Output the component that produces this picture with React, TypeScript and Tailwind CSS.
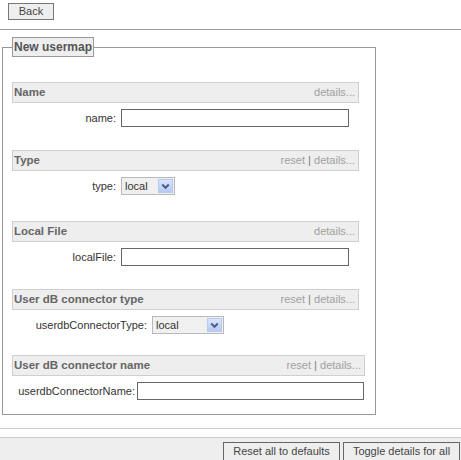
import React from 'react';

type Section = {
  title: string;
  reset?: boolean;
  label: string;
  labelWidth: string;
  gap: string;
  control: 'input' | 'select';
  controlWidth: string;
  width: string;
  mt: string;
};

const sections: Section[] = [
  { title: 'Name', label: 'name:', labelWidth: 'w-[104px]', gap: 'ml-[5px]', control: 'input', controlWidth: 'w-[228px]', width: 'w-[347px]', mt: 'mt-[25px]' },
  { title: 'Type', reset: true, label: 'type:', labelWidth: 'w-[104px]', gap: 'ml-[5px]', control: 'select', controlWidth: 'w-[54px]', width: 'w-[347px]', mt: 'mt-[23px]' },
  { title: 'Local File', label: 'localFile:', labelWidth: 'w-[104px]', gap: 'ml-[5px]', control: 'input', controlWidth: 'w-[228px]', width: 'w-[347px]', mt: 'mt-[26px]' },
  { title: 'User dB connector type', reset: true, label: 'userdbConnectorType:', labelWidth: 'w-[135px]', gap: 'ml-[5px]', control: 'select', controlWidth: 'w-[72px]', width: 'w-[347px]', mt: 'mt-[23px]' },
  { title: 'User dB connector name', reset: true, label: 'userdbConnectorName:', labelWidth: 'w-[123px]', gap: 'ml-[2px]', control: 'input', controlWidth: 'w-[227px]', width: 'w-[353px]', mt: 'mt-[21px]' },
];

function FakeSelect({ width }: { width: string }) {
  return (
    <div className={`${width} h-[18px] flex items-center justify-between border border-[#b9b9b9] bg-[#f0f0f0] pl-[3px] pr-[1px]`}>
      <span className="text-[11px] text-[#333]">local</span>
      <span className="w-[15px] h-[14px] flex items-center justify-center border border-[#b8c9ee] bg-[linear-gradient(#dbe5fb,#b7caf3)]">
        <svg width="9" height="7" viewBox="0 0 9 7">
          <path d="M1.2 1.5 L4.5 4.8 L7.8 1.5" fill="none" stroke="#4b5f8c" strokeWidth="2" />
        </svg>
      </span>
    </div>
  );
}

function SectionBlock({ s }: { s: Section }) {
  return (
    <div className={`${s.mt} ${s.width}`}>
      <div className="h-[21px] flex items-center justify-between border border-[#cfcfcf] bg-[#eeeeee] pl-[1px] pr-[3px]">
        <span className="text-[11.5px] font-bold text-[#666]">{s.title}</span>
        <span className="text-[11px] text-[#a0a0a0]">
          {s.reset && (
            <>
              reset <span className="text-[#777]">|</span>{' '}
            </>
          )}
          details...
        </span>
      </div>
      <div className="mt-[6px] h-[18px] flex items-center">
        <span className={`${s.labelWidth} text-right text-[11px] text-[#333]`}>{s.label}</span>
        <div className={s.gap}>
          {s.control === 'input' ? (
            <div className={`${s.controlWidth} h-[18px] border border-[#666] bg-white`} />
          ) : (
            <FakeSelect width={s.controlWidth} />
          )}
        </div>
      </div>
    </div>
  );
}

export default function App() {
  return (
    <div className="w-[461px] h-[460px] overflow-hidden bg-white font-['Liberation_Sans',Arial,sans-serif] text-[11px]">
      <div className="pt-[3px] pl-[8px]">
        <button className="w-[46px] h-[17px] border border-[#777] bg-[#eeeeee] text-[11px] text-[#444] leading-none">
          Back
        </button>
      </div>
      <div className="mt-[9px] border-t border-[#999]" />

      <fieldset className="mt-[7px] ml-[2px] w-[374px] border border-[#999] pl-[9px] pt-[0px] pb-[14px]">
        <legend className="h-[20px] px-[1px] border border-[#999] bg-[#eeeeee] text-[12px] font-bold text-[#555] leading-[18px]">
          New usermap
        </legend>
        {sections.map((s) => (
          <SectionBlock key={s.title} s={s} />
        ))}
      </fieldset>

      <div className="mt-[13px] border-t border-[#cccccc]" />
      <div className="mt-[8px] border-t border-[#cccccc] bg-[#eeeeee] pt-[4px] pr-[1px] pb-[2px] flex justify-end gap-[3px]">
        <button className="w-[117px] h-[19px] border border-[#666] bg-[#eeeeee] text-[11px] text-[#444] leading-none">
          Reset all to defaults
        </button>
        <button className="w-[117px] h-[19px] border border-[#666] bg-[#eeeeee] text-[11px] text-[#444] leading-none">
          Toggle details for all
        </button>
      </div>
    </div>
  );
}
